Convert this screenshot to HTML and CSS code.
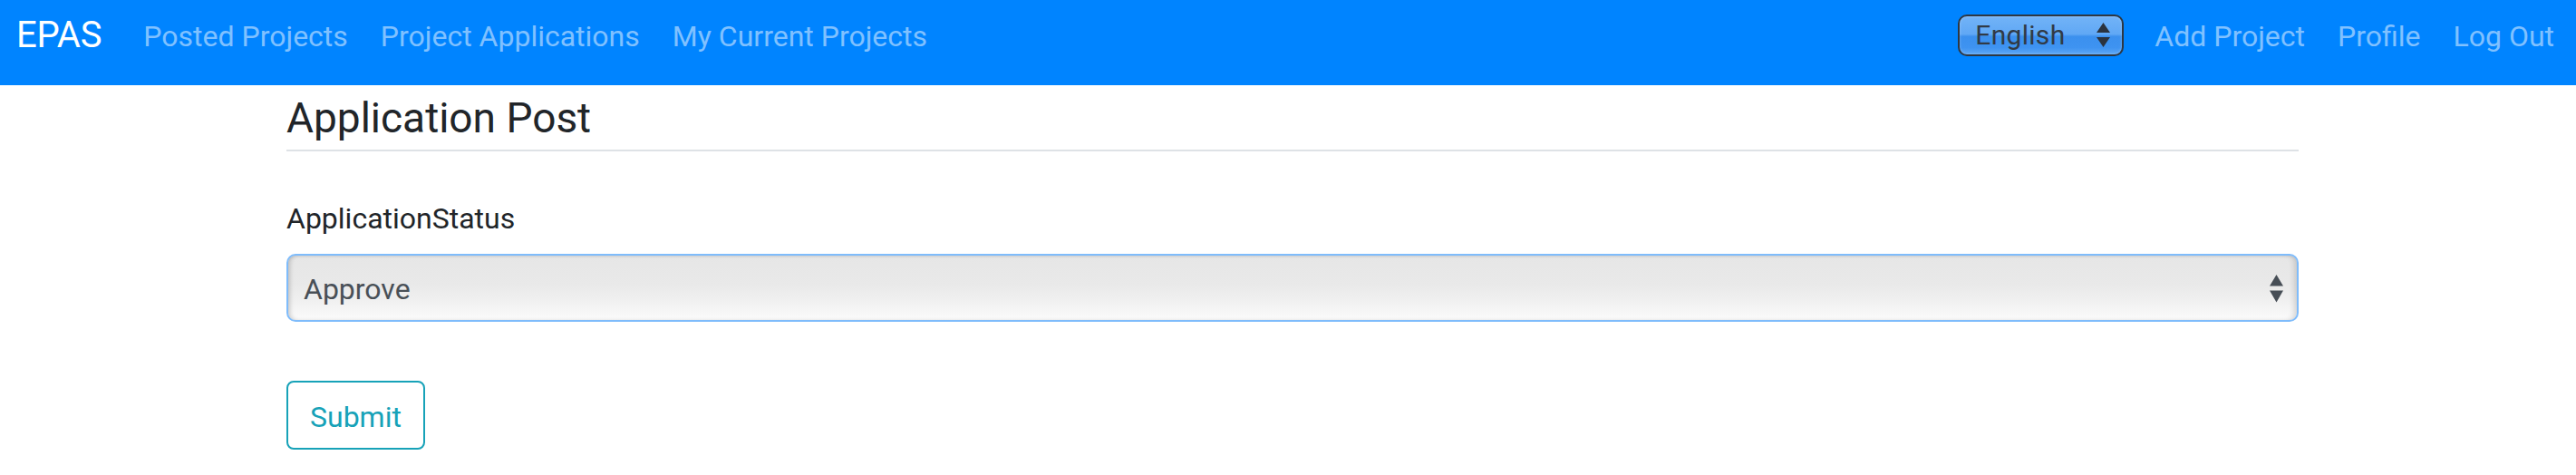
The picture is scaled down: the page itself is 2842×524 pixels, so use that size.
FILE: index.html
```html
<!DOCTYPE html>
<html lang="en">
<head>
<meta charset="utf-8">
<title>EPAS</title>
<link rel="stylesheet" href="styles.css">
</head>
<body>
<nav class="navbar">
  <a class="brand" href="#">EPAS</a>
  <ul class="nav">
    <li><a class="nav-link" href="#">Posted Projects</a></li>
    <li><a class="nav-link" href="#">Project Applications</a></li>
    <li><a class="nav-link" href="#">My Current Projects</a></li>
  </ul>
  <div class="nav-right">
    <div class="lang-select">
      <span class="lang-text">English</span>
      <svg class="lang-arrows" width="15" height="27" viewBox="0 0 15 27"><path d="M7.5 0 L15 11 L0 11 Z M0 16 L15 16 L7.5 27 Z" fill="#2b333e"/></svg>
    </div>
    <ul class="nav">
      <li><a class="nav-link" href="#">Add Project</a></li>
      <li><a class="nav-link" href="#">Profile</a></li>
      <li><a class="nav-link" href="#">Log Out</a></li>
    </ul>
  </div>
</nav>
<main class="container">
  <h4 class="page-title">Application Post</h4>
  <form class="form">
    <label class="form-label">ApplicationStatus</label>
    <div class="form-select">
      <span class="select-text">Approve</span>
      <svg class="select-arrows" width="15" height="31" viewBox="0 0 15 31"><path d="M7.5 0 L15 12.5 L0 12.5 Z M0 17.5 L15 17.5 L7.5 30.5 Z" fill="#474e56"/></svg>
    </div>
    <button class="btn-outline" type="button">Submit</button>
  </form>
</main>
</body>
</html>
```
FILE: styles.css
```css
* { box-sizing: border-box; }
html, body { margin: 0; padding: 0; }
body {
  font-family: Roboto, "Liberation Sans", Arial, sans-serif;
  color: #212529;
  background: #ffffff;
  width: 2842px;
  height: 524px;
  overflow: hidden;
}
a { text-decoration: none; }
ul { list-style: none; margin: 0; padding: 0; }

.navbar {
  height: 94px;
  background: #0084ff;
  display: flex;
  align-items: center;
  padding: 0 6px 17px 18px;
}
.brand {
  color: #ffffff;
  font-size: 40px;
  letter-spacing: -0.2px;
  line-height: 60px;
  margin-right: 28px;
}
.nav { display: flex; align-items: center; }
.nav-link {
  display: block;
  color: #80c1ff;
  font-size: 32px;
  line-height: 48px;
  padding: 2px 18px 0;
}
.nav-right {
  margin-left: auto;
  display: flex;
  align-items: center;
}
.lang-select {
  width: 183px;
  height: 46px;
  margin-right: 16px;
  border: 2px solid #2e3742;
  border-radius: 10px;
  background: linear-gradient(to bottom, #72b3f7 0%, #60a8f5 47%, #3b90ee 53%, #3e93f1 82%, #5ba6f6 100%);
  box-shadow: inset 0 0 3px rgba(255,255,255,0.35);
  display: flex;
  align-items: center;
  padding: 0 13px 0 17px;
}
.lang-text {
  color: #313a45;
  font-size: 30px;
  letter-spacing: 0.3px;
  line-height: 40px;
}
.lang-arrows { margin-left: auto; }

.container {
  width: 2220px;
  margin-left: 316px;
}
.page-title {
  font-size: 46px;
  font-weight: 400;
  line-height: 55px;
  margin: 9px 0 0;
  padding-bottom: 7px;
  border-bottom: 2px solid #dee2e6;
  color: #212529;
}
.form { display: flex; flex-direction: column; align-items: flex-start; }
.form-label {
  display: block;
  font-size: 32px;
  line-height: 48px;
  margin-top: 50px;
  margin-bottom: 15px;
  color: #212529;
}
.form-select {
  width: 2220px;
  height: 75px;
  border: 2px solid #7fbcfb;
  border-radius: 10px;
  background: linear-gradient(to bottom, #e6e6e6 0%, #e9e9e9 45%, #f0f0f0 70%, #fbfbfb 100%);
  box-shadow: inset 4px 0 5px -2px rgba(0,0,0,0.18), inset -6px 0 6px -3px rgba(0,0,0,0.14), inset 0 2px 3px -1px rgba(0,0,0,0.06);
  display: flex;
  align-items: center;
  padding: 2px 15px 0 17px;
}
.select-text {
  color: #495057;
  font-size: 32px;
  line-height: 48px;
}
.select-arrows { margin-left: auto; }
.btn-outline {
  margin-top: 65px;
  height: 76px;
  padding: 14px 24px 10px;
  border: 2px solid #17a2b8;
  border-radius: 8px;
  background: #ffffff;
  color: #17a2b8;
  font-family: Roboto, "Liberation Sans", Arial, sans-serif;
  font-size: 32px;
  line-height: 48px;
  cursor: pointer;
}
```
